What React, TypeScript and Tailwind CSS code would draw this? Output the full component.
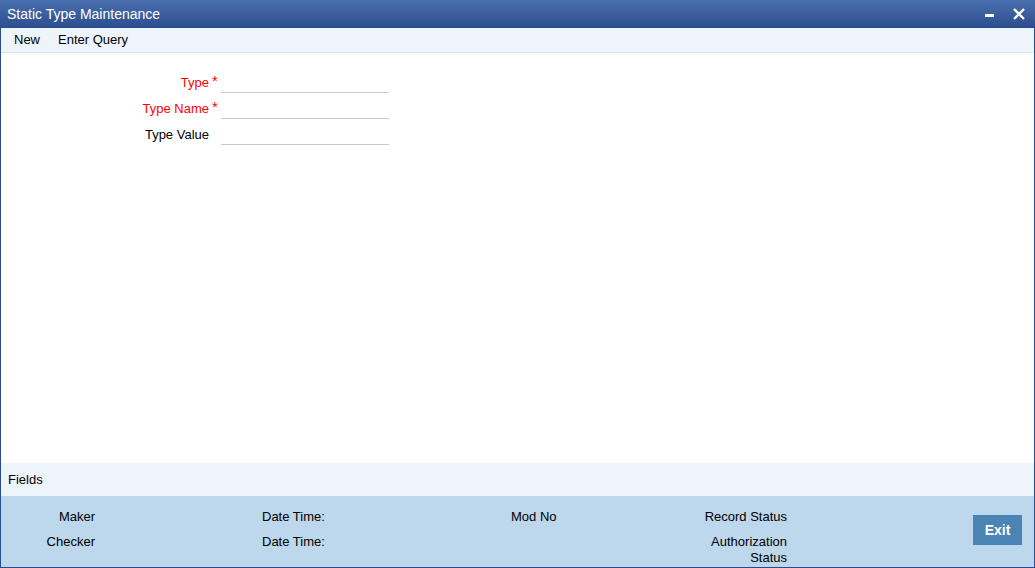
import React from "react";

export default function App() {
  const font = { fontFamily: '"Liberation Sans", Arial, sans-serif' };
  return (
    <div className="w-[1035px] h-[568px] flex flex-col bg-white overflow-hidden" style={font}>
      {/* Title bar */}
      <div className="h-[28px] flex items-center justify-between bg-gradient-to-b from-[#4a6fae] to-[#2c4d8e] text-white">
        <span className="pl-[7px] text-[14px] leading-none">Static Type Maintenance</span>
        <div className="flex items-center gap-[16px] pr-[9px]">
          <svg width="12" height="12" viewBox="0 0 12 12">
            <rect x="1" y="6" width="9" height="3" fill="#fff" />
          </svg>
          <svg width="14" height="14" viewBox="0 0 14 14">
            <path d="M2 2 L12 12 M12 2 L2 12" stroke="#fff" strokeWidth="2.4" />
          </svg>
        </div>
      </div>
      {/* Body with borders */}
      <div className="flex-1 flex flex-col border-x border-b border-[#2b4c8c]">
        {/* Toolbar */}
        <div className="h-[25px] flex items-center gap-[18px] pl-[13px] bg-[#eef4fc] border-b border-[#dde5ee] text-[13px] text-black">
          <span>New</span>
          <span>Enter Query</span>
        </div>
        {/* Main form */}
        <div className="flex-1 bg-white pt-[14px]">
          <div className="flex flex-col">
            {[
              { label: "Type", req: true },
              { label: "Type Name", req: true },
              { label: "Type Value", req: false },
            ].map((f) => (
              <div key={f.label} className="flex items-end h-[26px]">
                <div className="w-[208px] text-right text-[13px] leading-[16px] pb-[2px]">
                  <span className={f.req ? "text-[#ff0000]" : "text-black"}>{f.label}</span>
                </div>
                <div className="w-[12px] text-[#ff0000] text-[15px] leading-[16px] pb-[4px] pl-[3px]">
                  {f.req ? "*" : ""}
                </div>
                <div className="w-[168px] h-[25px] border-b border-[#c8c8c8]" />
              </div>
            ))}
          </div>
        </div>
        {/* Fields bar */}
        <div className="h-[33px] flex items-center pl-[7px] bg-[#eef4fc] text-[13px] text-black">
          Fields
        </div>
        {/* Footer */}
        <div className="h-[71px] bg-[#bdd7ec] flex text-[13px] text-black leading-[16px]">
          <div className="w-[94px] flex flex-col items-end pt-[13px] gap-[9px]">
            <span>Maker</span>
            <span>Checker</span>
          </div>
          <div className="w-[416px] flex flex-col pl-[167px] pt-[13px] gap-[9px]">
            <span>Date Time:</span>
            <span>Date Time:</span>
          </div>
          <div className="w-[276px] flex flex-col items-end pt-[13px] gap-[9px] relative">
            <span className="absolute left-0 top-[13px]">Mod No</span>
            <span>Record Status</span>
            <span className="text-right">
              Authorization
              <br />
              Status
            </span>
          </div>
          <div className="flex-1 flex items-start justify-end pr-[12px] pt-[19px]">
            <button className="w-[49px] h-[30px] bg-[#4a84b4] text-white font-bold text-[14px]">
              Exit
            </button>
          </div>
        </div>
      </div>
    </div>
  );
}
